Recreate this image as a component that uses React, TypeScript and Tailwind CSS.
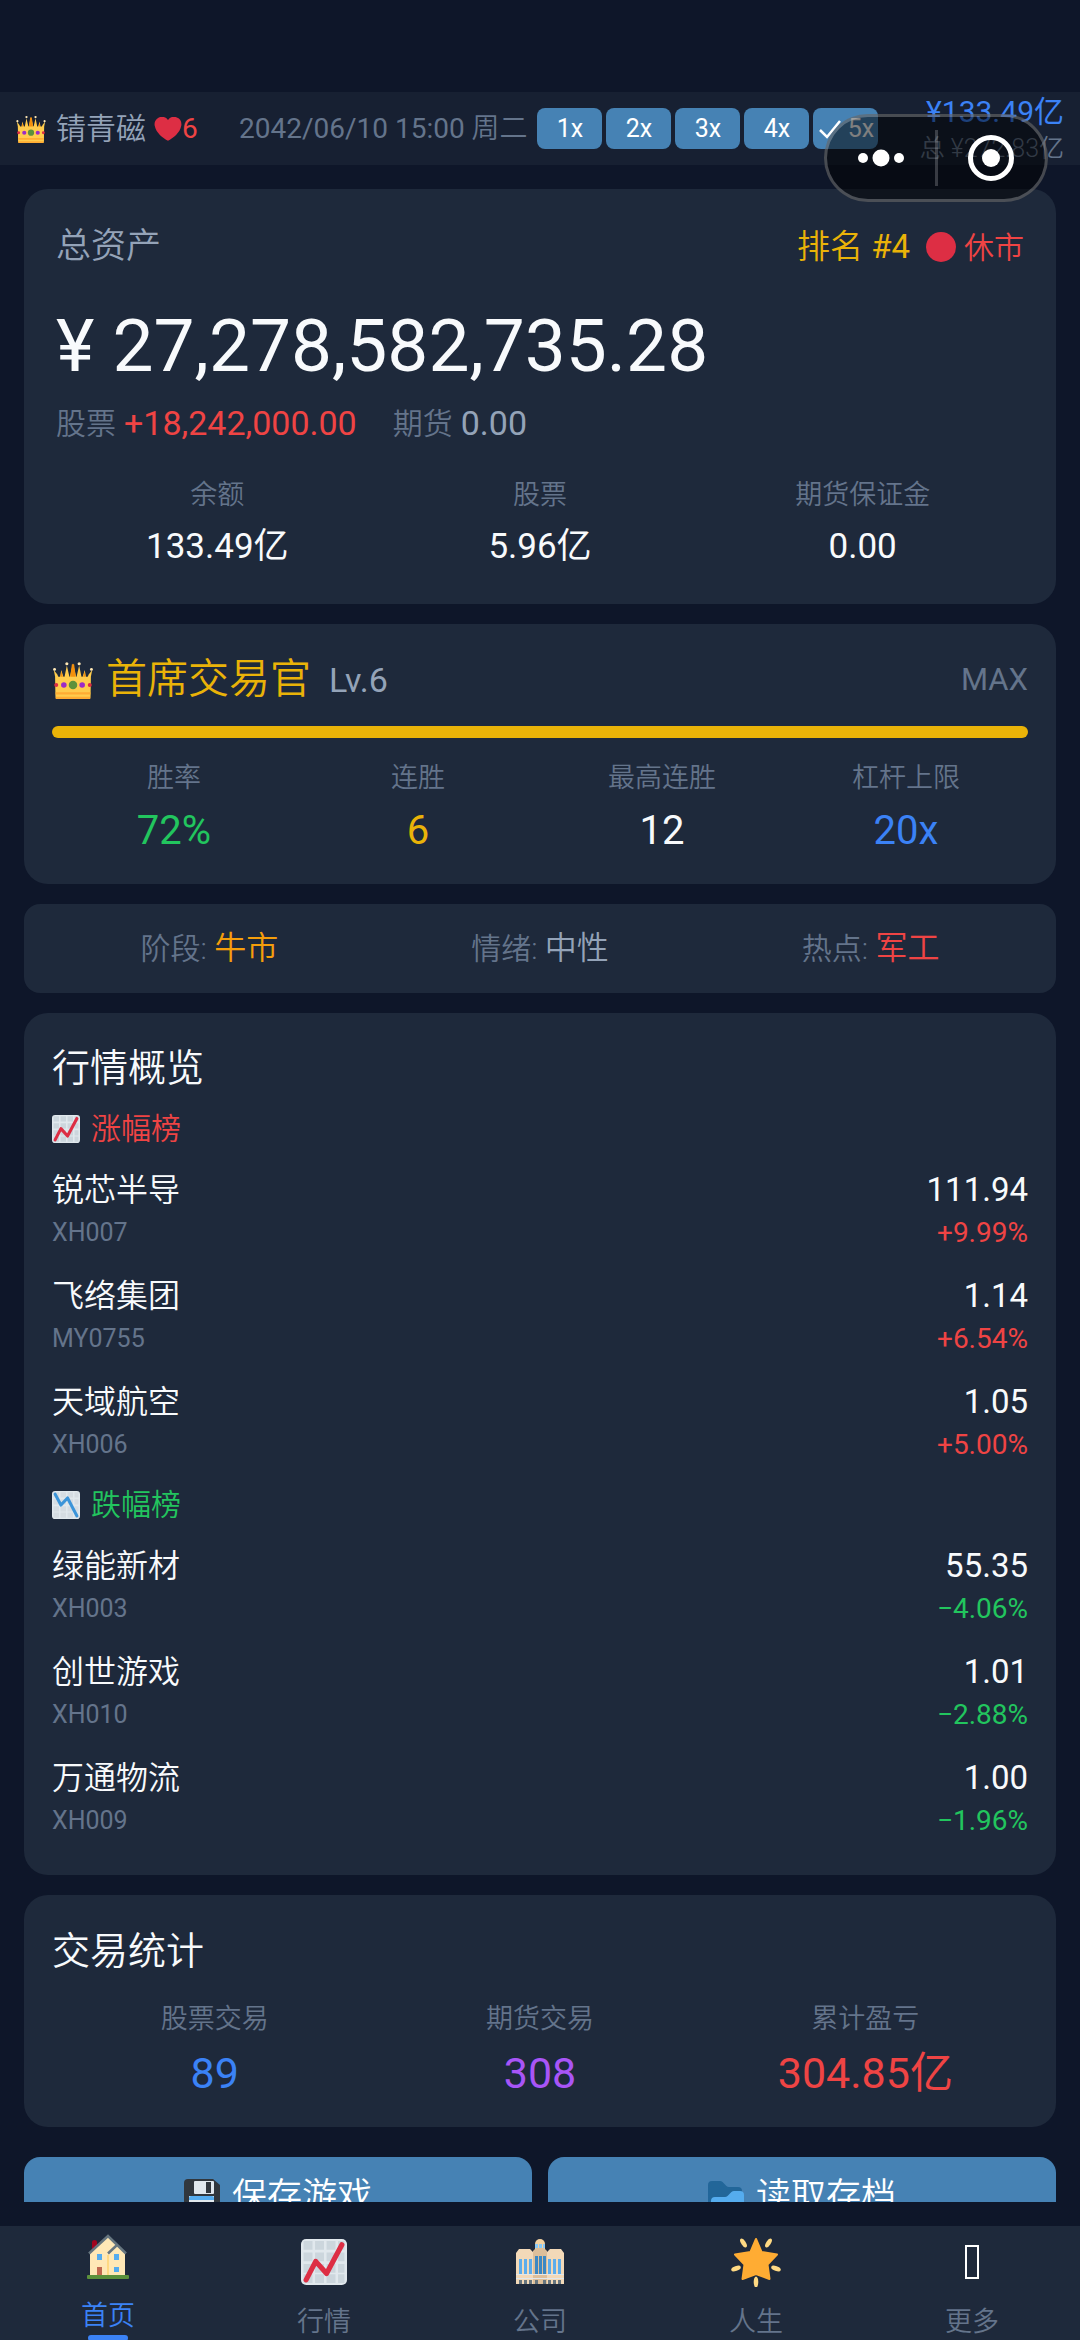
import { useState } from 'react';
import type { ReactNode } from 'react';

const MUTED = 'text-[#64748b]';
const SOFT = 'text-[#94a3b8]';
const RED = 'text-[#ef4444]';
const GREEN = 'text-[#22c55e]';
const GOLD = 'text-[#eab308]';
const BLUE = 'text-[#3b82f6]';

const gainers = [
  { name: '锐芯半导', code: 'XH007', price: '111.94', change: '+9.99%' },
  { name: '飞络集团', code: 'MY0755', price: '1.14', change: '+6.54%' },
  { name: '天域航空', code: 'XH006', price: '1.05', change: '+5.00%' },
];

const losers = [
  { name: '绿能新材', code: 'XH003', price: '55.35', change: '−4.06%' },
  { name: '创世游戏', code: 'XH010', price: '1.01', change: '−2.88%' },
  { name: '万通物流', code: 'XH009', price: '1.00', change: '−1.96%' },
];

function CrownIcon({ className }: { className: string }) {
  return (
    <svg viewBox="0 0 36 34" className={className} aria-hidden="true">
      <path
        fill="#FFCC4D"
        d="M2.500 33 2 14 .8 8 4 12l2 5L7.500 8 10 16 12.500 4 15 15 18 2l3 13L23.500 4 26 16 28.500 8 30 17l2-5 3.200-4L34 14l-.5 19Z"
      />
      <path fill="#F4900C" d="M17 3 15.500 14 18 16 20.500 14 19 3ZM7.500 9 6.500 16 9.500 16ZM28.500 9 29.500 16 26.500 16Z" />
      <path fill="#FFCC4D" d="M2.500 14h31v18h-31z" />
      <path fill="#FFAC33" d="M2.500 28h31v2h-31zM2.500 32h31v2h-31z" />
      <circle cx="1.500" cy="7.500" r="1.300" fill="#FFE8B6" />
      <circle cx="34.500" cy="7.500" r="1.300" fill="#FFE8B6" />
      <circle cx="12.500" cy="2.500" r="1.400" fill="#FFE8B6" />
      <circle cx="23.500" cy="2.500" r="1.400" fill="#FFE8B6" />
      <circle cx="18" cy="21.500" r="3.800" fill="#5C913B" />
      <circle cx="9.800" cy="21.500" r="2.500" fill="#9B2BC8" />
      <circle cx="26.200" cy="21.500" r="2.500" fill="#9B2BC8" />
      <circle cx="3" cy="21.500" r="1.800" fill="#DD2E44" />
      <circle cx="33" cy="21.500" r="1.800" fill="#DD2E44" />
    </svg>
  );
}

function HeartIcon({ className }: { className: string }) {
  return (
    <svg viewBox="0 0 36 32" className={className} aria-hidden="true">
      <path
        fill="#DD2E44"
        d="M35.900 9.700A9.800 9.800 0 0 0 18 4.100 9.800 9.800 0 0 0 .4 12.100C1.700 20.600 11.300 28.800 18 31.600c6.700-2.800 16.300-11 17.600-19.500.2-.8.3-1.600.3-2.400z"
      />
    </svg>
  );
}

function ChartIcon({ className, down = false }: { className: string; down?: boolean }) {
  return (
    <svg viewBox="0 0 36 36" className={className} aria-hidden="true">
      <rect width="36" height="36" rx="4" fill="#E1E8ED" />
      <path
        fill="none"
        stroke={down ? '#D5DCE2' : '#CCD6DD'}
        strokeWidth="7"
        strokeDasharray="7 2"
        d="M2 5h32M2 14h32M2 23h32M2 31h32"
      />
      <path
        fill="none"
        stroke={down ? '#3B94D9' : '#DD2E44'}
        strokeWidth="4"
        strokeLinecap="round"
        strokeLinejoin="round"
        d={down ? 'M4 4l7.500 14L20 9l12 23' : 'M4 32l7.500-14.500L20 27 32 4.500'}
      />
    </svg>
  );
}

function FloppyIcon({ className }: { className: string }) {
  return (
    <svg viewBox="0 0 36 36" className={className} aria-hidden="true">
      <path fill="#31373D" d="M4 0h25l7 6v26a4 4 0 0 1-4 4H4a4 4 0 0 1-4-4V4a4 4 0 0 1 4-4z" />
      <rect x="10" y="2" width="20" height="13" rx="1" fill="#E1E8ED" />
      <path fill="#31373D" d="M22 3h5v11h-5z" />
      <path fill="#E1E8ED" d="M5 17h25v17H5z" />
      <path fill="#55ACEE" d="M7 17h21a2 2 0 0 1 2 2v2H5v-2a2 2 0 0 1 2-2z" />
    </svg>
  );
}

function FolderIcon({ className }: { className: string }) {
  return (
    <svg viewBox="0 0 36 32" className={className} aria-hidden="true">
      <path fill="#226699" d="M0 28V4a4 4 0 0 1 4-4h8c4 0 5 6 9 6h9a4 4 0 0 1 4 4v18z" />
      <path fill="#55ACEE" d="M3 32V20a4 4 0 0 1 4-4h10c4 0 5-6 9-6h6a4 4 0 0 1 4 4v14a4 4 0 0 1-4 4z" />
    </svg>
  );
}

function HouseIcon() {
  return (
    <svg viewBox="0 0 42 46" className="h-[46px] w-[42px]" aria-hidden="true">
      <path fill="#A0041E" d="M5 8q0-2 2.500-2T10 8v6l-5 5z" />
      <path fill="#FFE8B6" d="M3 18 21 2l17 17v24H3z" />
      <path fill="#FFD983" d="M20 21h2v22h-2z" />
      <path fill="none" stroke="#66757F" strokeWidth="2.500" d="M2 19.500 21 2l18 17.500M21 19.500l8.500-8" />
      <path fill="#55ACEE" d="M10 20h5v6h-5zM27 20h5v6h-5zM27 33h5v5h-5z" />
      <path fill="#C1694F" d="M10 33h5v8h-5z" />
      <rect y="41" width="42" height="4" rx="1" fill="#5C913B" />
    </svg>
  );
}

function CompanyIcon() {
  return (
    <svg viewBox="0 0 50 46" className="h-[46px] w-[50px]" aria-hidden="true">
      <path fill="#F3D2A2" d="M20 10V5a5 5 0 0 1 10 0v5z" />
      <path fill="#88C9F9" d="M20 5h3v4h-3zM24 5h3v4h-3zM28 5h2v4h-2z" />
      <path fill="#F3D9B8" d="M1 14l3-4h11l3 3v32H1zM49 14l-3-4H35l-3 3v32h17z" />
      <path fill="#DDBF9A" d="M18 12l3-3h8l3 3v33H18z" />
      <path fill="#5DADEC" d="M4 20h3v15H4zM9 20h3v15H9zM14 20h3v15h-3zM33 20h3v15h-3zM38 20h3v15h-3zM43 20h3v15h-3z" />
      <path fill="#3B88C3" d="M20 17h3v18h-3zM24 17h3v18h-3zM28 17h3v18h-3z" />
      <path fill="#E1E8ED" d="M1 35h48v1H1zM1 39h48v1H1z" />
      <path fill="#66757F" d="M4 41h3v4H4zM9 41h3v4H9zM14 41h3v4h-3zM20 41h3v4h-3zM28 41h3v4h-3zM33 41h3v4h-3zM38 41h3v4h-3zM43 41h3v4h-3z" />
    </svg>
  );
}

function StarIcon() {
  return (
    <svg viewBox="0 0 50 50" className="h-[50px] w-[50px]" aria-hidden="true">
      <path
        fill="#FFAC33"
        stroke="#FFAC33"
        strokeWidth="2"
        strokeLinejoin="round"
        d="M25 2l5.500 13 15.500 2.500-9.500 10L38.500 42 25 37 11.500 42l2-14.500-9.500-10L19.500 15z"
      />
      <g fill="#FFD983">
        <ellipse cx="12.500" cy="6" rx="2.300" ry="5" transform="rotate(-33 12.500 6)" />
        <ellipse cx="37.500" cy="6" rx="2.300" ry="5" transform="rotate(33 37.500 6)" />
        <ellipse cx="5" cy="31.500" rx="5" ry="2.300" transform="rotate(-20 5 31.500)" />
        <ellipse cx="45" cy="31.500" rx="5" ry="2.300" transform="rotate(20 45 31.500)" />
        <ellipse cx="25" cy="45" rx="2.300" ry="5.500" />
      </g>
    </svg>
  );
}

function MissingGlyph() {
  return <span className="block h-[34px] w-[14px] border-2 border-white" />;
}

function Card({ className = '', children }: { className?: string; children: ReactNode }) {
  return <section className={`bg-[#1e293b] ${className}`}>{children}</section>;
}

function Stat({ label, value, className }: { label: string; value: string; className: string }) {
  return (
    <div className="flex flex-1 flex-col items-center">
      <span className={`text-[27px] leading-10 ${MUTED}`}>{label}</span>
      <span className={`font-normal ${className}`}>{value}</span>
    </div>
  );
}

function StockRow({ stock, color }: { stock: (typeof gainers)[number]; color: string }) {
  return (
    <li className="flex justify-between pt-2 pb-3">
      <div className="flex flex-col">
        <span className="text-[32px] leading-[46px]">{stock.name}</span>
        <span className={`text-[25px] leading-10 font-normal ${MUTED}`}>{stock.code}</span>
      </div>
      <div className="flex flex-col items-end font-normal">
        <span className="text-[33px] leading-[46px]">{stock.price}</span>
        <span className={`text-[28px] leading-10 ${color}`}>{stock.change}</span>
      </div>
    </li>
  );
}

const tabs = [
  { id: 'home', label: '首页', icon: <HouseIcon /> },
  { id: 'market', label: '行情', icon: <ChartIcon className="h-[46px] w-[46px]" /> },
  { id: 'company', label: '公司', icon: <CompanyIcon /> },
  { id: 'life', label: '人生', icon: <StarIcon /> },
  { id: 'more', label: '更多', icon: <MissingGlyph /> },
];

export default function App() {
  const [speed, setSpeed] = useState(5);
  const [tab, setTab] = useState('home');

  return (
    <div className="relative flex h-screen flex-col overflow-hidden bg-[#0e1629] pt-[92px] font-[Roboto,'Noto_Sans_CJK_SC',sans-serif] font-[350] text-[#f8fafc]">
      {/* Top bar */}
      <header className="flex h-[73px] shrink-0 items-center justify-between bg-[#172032] px-4">
        <div className="flex items-center">
          <CrownIcon className="h-7 w-[30px]" />
          <span className={`ml-2.5 text-[30px] ${SOFT}`}>锖青磁</span>
          <HeartIcon className="ml-2 h-6 w-7" />
          <span className={`text-[28px] font-normal ${RED}`}>6</span>
        </div>
        <div className="flex items-center gap-2.5">
          <span className={`text-[28px] whitespace-nowrap ${MUTED}`}>
            <span className="font-normal">2042/06/10 15:00</span> 周二
          </span>
          <div className="flex gap-1 font-normal">
            {[1, 2, 3, 4, 5].map(n => (
              <button
                key={n}
                onClick={() => setSpeed(n)}
                aria-pressed={speed === n}
                className="flex h-[41px] w-[65px] items-center justify-center gap-1.5 rounded-lg bg-[#4682b4] text-[25px] leading-none text-white"
              >
                {speed === n && (
                  <svg viewBox="0 0 24 20" className="h-5 w-6" fill="none" stroke="white" strokeWidth="2.500" aria-hidden="true">
                    <path d="M2 11l7 7L22 2" />
                  </svg>
                )}
                {n}x
              </button>
            ))}
          </div>
        </div>
        <div className="flex flex-col items-end whitespace-nowrap">
          <span className={`text-[30px] leading-10 font-normal ${BLUE}`}>¥133.49亿</span>
          <span className={`text-[25px] leading-[34px] ${MUTED}`}>总 ¥272.83亿</span>
        </div>
      </header>

      {/* Host app capsule, floats over the header */}
      <div className="absolute top-[114px] right-8 flex h-[88px] w-[224px] items-center rounded-full border-3 border-white/25 bg-black/50">
        <button aria-label="更多操作" className="flex h-full flex-1 items-center justify-center">
          <svg viewBox="0 0 48 18" className="h-[18px] w-12" fill="white">
            <circle cx="6" cy="9" r="5" />
            <circle cx="24" cy="9" r="8.500" />
            <circle cx="42" cy="9" r="5" />
          </svg>
        </button>
        <span className="h-14 w-[3px] bg-white/20" />
        <button aria-label="关闭" className="flex h-full flex-1 items-center justify-center">
          <svg viewBox="0 0 48 48" className="h-12 w-12" fill="white">
            <circle cx="24" cy="24" r="20.500" fill="none" stroke="white" strokeWidth="5" />
            <circle cx="24" cy="24" r="9" />
          </svg>
        </button>
      </div>

      <main className="flex min-h-0 flex-1 flex-col gap-5 overflow-y-auto px-6 pt-6 [scrollbar-width:none] *:shrink-0">
        {/* Assets */}
        <Card className="rounded-3xl px-8 pt-8 pb-[33px]">
          <div className="flex h-[52px] items-center justify-between">
            <h2 className={`text-[35px] ${SOFT}`}>总资产</h2>
            <div className="flex items-center">
              <span className={`text-[33px] ${GOLD}`}>
                排名 <span className="font-normal">#4</span>
              </span>
              <span className="ml-4 h-[30px] w-[30px] rounded-full bg-[#dd2e44]" />
              <span className={`ml-2 text-[30px] ${RED}`}>休市</span>
            </div>
          </div>
          <p className="mt-7 text-[73px] leading-[90px] font-normal">¥ 27,278,582,735.28</p>
          <div className={`mt-2 flex h-12 items-center gap-9 text-[30px] ${MUTED}`}>
            <span className="flex items-center gap-2">
              股票 <span className={`text-[34px] font-normal ${RED}`}>+18,242,000.00</span>
            </span>
            <span className="flex items-center gap-2">
              期货 <span className={`text-[34px] font-normal ${SOFT}`}>0.00</span>
            </span>
          </div>
          <div className="mt-7 flex">
            <Stat label="余额" value="133.49亿" className="mt-2 text-[35px] leading-12" />
            <Stat label="股票" value="5.96亿" className="mt-2 text-[35px] leading-12" />
            <Stat label="期货保证金" value="0.00" className="mt-2 text-[35px] leading-12" />
          </div>
        </Card>

        {/* Rank */}
        <Card className="rounded-3xl px-7 pt-7 pb-7">
          <div className="flex h-14 items-center">
            <CrownIcon className="h-[38px] w-[42px]" />
            <h2 className={`ml-3 text-[41px] ${GOLD}`}>首席交易官</h2>
            <span className={`ml-[18px] text-[34px] font-normal ${SOFT}`}>Lv.6</span>
            <span className={`ml-auto text-[31px] font-normal ${MUTED}`}>MAX</span>
          </div>
          <div className="mt-[18px] h-3 rounded-full bg-[#eab308]" />
          <div className="mt-5 flex">
            <Stat label="胜率" value="72%" className={`mt-2 text-[40px] leading-[50px] ${GREEN}`} />
            <Stat label="连胜" value="6" className={`mt-2 text-[40px] leading-[50px] ${GOLD}`} />
            <Stat label="最高连胜" value="12" className="mt-2 text-[40px] leading-[50px]" />
            <Stat label="杠杆上限" value="20x" className={`mt-2 text-[40px] leading-[50px] ${BLUE}`} />
          </div>
        </Card>

        {/* Market mood */}
        <Card className={`flex rounded-2xl px-5 py-5 text-center text-[30px] leading-12 ${MUTED}`}>
          <p className="flex-1">
            阶段: <span className="text-[32px] text-[#f59e0b]">牛市</span>
          </p>
          <p className="flex-1">
            情绪: <span className={`text-[32px] ${SOFT}`}>中性</span>
          </p>
          <p className="flex-1">
            热点: <span className={`text-[32px] ${RED}`}>军工</span>
          </p>
        </Card>

        {/* Market overview */}
        <Card className="rounded-3xl px-7 pt-7 pb-[22px]">
          <h2 className="text-[38px] leading-[54px]">行情概览</h2>
          <h3 className={`mt-3.5 mb-2.5 flex items-center gap-[11px] text-[30px] leading-10 ${RED}`}>
            <ChartIcon className="h-7 w-7" />
            涨幅榜
          </h3>
          <ul>
            {gainers.map(s => (
              <StockRow key={s.code} stock={s} color={RED} />
            ))}
          </ul>
          <h3 className={`mt-2 mb-2.5 flex items-center gap-[11px] text-[30px] leading-10 ${GREEN}`}>
            <ChartIcon className="h-7 w-7" down />
            跌幅榜
          </h3>
          <ul>
            {losers.map(s => (
              <StockRow key={s.code} stock={s} color={GREEN} />
            ))}
          </ul>
        </Card>

        {/* Trade stats */}
        <Card className="rounded-3xl px-7 pt-7 pb-[26px]">
          <h2 className="text-[38px] leading-14">交易统计</h2>
          <div className="mt-5 flex">
            <Stat label="股票交易" value="89" className={`mt-1.5 text-[43px] leading-14 ${BLUE}`} />
            <Stat label="期货交易" value="308" className="mt-1.5 text-[43px] leading-14 text-[#a855f7]" />
            <Stat label="累计盈亏" value="304.85亿" className={`mt-1.5 text-[43px] leading-14 ${RED}`} />
          </div>
        </Card>

        <div className="mt-2.5 flex gap-4 pb-6">
          <button className="flex h-20 flex-1 items-center justify-center gap-3 rounded-2xl bg-[#4682b4] text-[35px] text-white">
            <FloppyIcon className="h-9 w-9" />
            保存游戏
          </button>
          <button className="flex h-20 flex-1 items-center justify-center gap-3 rounded-2xl bg-[#4682b4] text-[35px] text-white">
            <FolderIcon className="h-8 w-9" />
            读取存档
          </button>
        </div>
      </main>

      {/* Tab bar */}
      <nav className="mt-6 flex h-[114px] shrink-0 bg-[#1e293b]">
        {tabs.map(t => (
          <button
            key={t.id}
            onClick={() => setTab(t.id)}
            className={`flex flex-1 flex-col items-center ${tab === t.id ? 'pt-2' : 'pt-3'}`}
          >
            <span className="flex h-12 items-center justify-center">{t.icon}</span>
            <span className={`mt-[18px] text-[27px] leading-9 ${tab === t.id ? BLUE : MUTED}`}>{t.label}</span>
            {tab === t.id && <span className="mt-px h-1.5 w-10 shrink-0 rounded-sm bg-[#3b82f6]" />}
          </button>
        ))}
      </nav>
    </div>
  );
}
